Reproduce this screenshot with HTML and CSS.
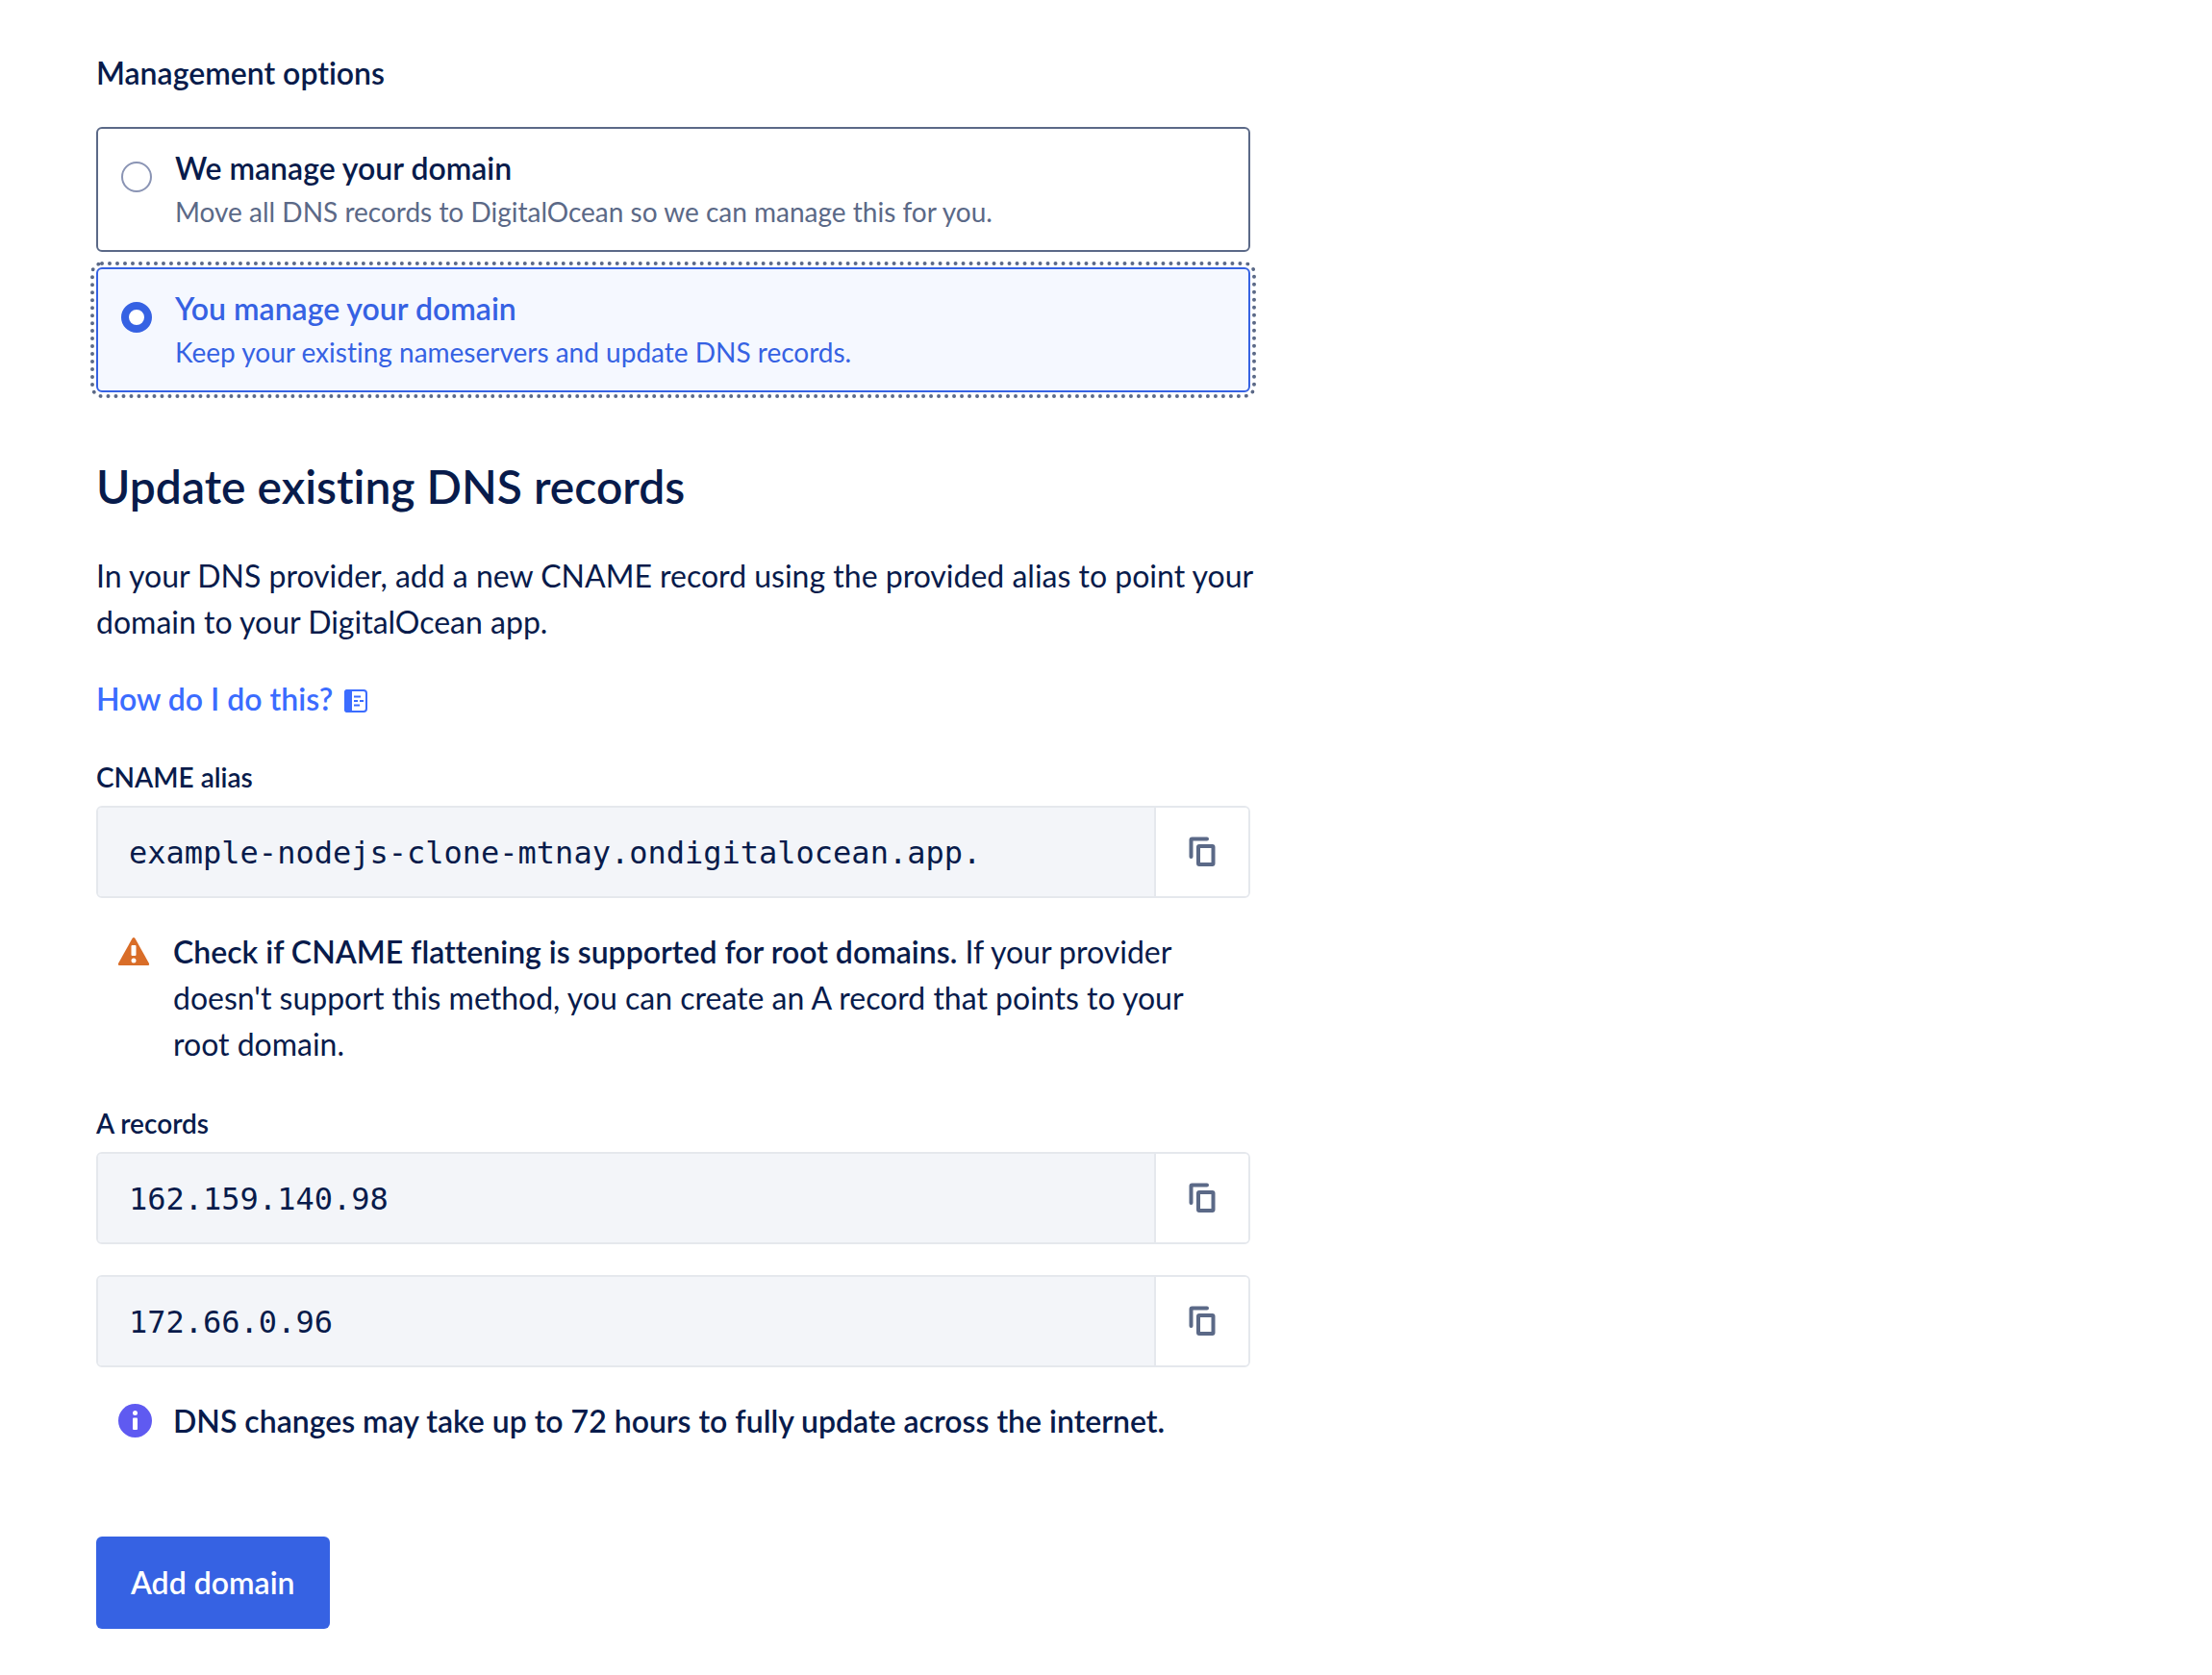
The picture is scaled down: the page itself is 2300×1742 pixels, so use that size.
FILE: index.html
```html
<!doctype html>
<html lang="en">
<head>
    <meta charset="UTF-8">
    <meta name="viewport" content="width=device-width, initial-scale=1.0">
    <title>Add domain</title>
    <link rel="stylesheet" href="styles.css">
</head>
<body>
    <!--copy icon, shared by all the fields-->
    <svg class="sprite" aria-hidden="true">
        <symbol id="copy" viewBox="0 0 28 32">
            <path d="M2.5 21V3.5q0-1 1-1H19" fill="none" stroke="currentColor" stroke-width="4" stroke-linecap="round"/>
            <rect x="10" y="10" width="15.5" height="19" rx="1" fill="none" stroke="currentColor" stroke-width="4"/>
        </symbol>
    </svg>
    <form class="container">
        <fieldset class="options">
            <legend>Management options</legend>
            <label class="option">
                <input type="radio" name="manage" value="we">
                <span class="option-text">
                    <span class="option-title">We manage your domain</span>
                    <span class="option-desc">Move all DNS records to DigitalOcean so we can manage this for you.</span>
                </span>
            </label>
            <label class="option on">
                <input type="radio" name="manage" value="you" checked>
                <span class="option-text">
                    <span class="option-title">You manage your domain</span>
                    <span class="option-desc">Keep your existing nameservers and update DNS records.</span>
                </span>
            </label>
        </fieldset>

        <h2>Update existing DNS records</h2>
        <p class="intro">In your DNS provider, add a new CNAME record using the provided alias to point your domain to your DigitalOcean app.</p>
        <a class="help" href="#">How do I do this?
            <svg width="24" height="24" viewBox="0 0 24 24" aria-hidden="true">
                <rect x="1" y="1" width="22" height="22" rx="3" fill="none" stroke="currentColor" stroke-width="2"/>
                <path d="M3 0h5v24H3q-3 0-3-3V3q0-3 3-3z" fill="currentColor"/>
                <path d="M10 7.5h7M10 12h4M16 12h4M10 16.500h6" fill="none" stroke="currentColor" stroke-width="2"/>
            </svg>
        </a>

        <label class="label" for="cname">CNAME alias</label>
        <div class="field">
            <input id="cname" type="text" value="example-nodejs-clone-mtnay.ondigitalocean.app." readonly>
            <button type="button" aria-label="Copy"><svg width="28" height="32"><use href="#copy"/></svg></button>
        </div>

        <div class="notice">
            <svg width="36" height="36" viewBox="0 0 36 36" aria-hidden="true">
                <path d="M15.500 4q1.500-2 3 0l14.500 26q.8 2-1 2H2q-1.800 0-1-2z" fill="#d96d28"/>
                <rect x="14.500" y="11" width="5" height="11" rx="1" fill="#fff"/>
                <circle cx="17" cy="27" r="2.500" fill="#fff"/>
            </svg>
            <p><strong>Check if CNAME flattening is supported for root domains.</strong> If your provider doesn't support this method, you can create an A record that points to your root domain.</p>
        </div>

        <label class="label" for="record1">A records</label>
        <div class="field">
            <input id="record1" type="text" value="162.159.140.98" readonly>
            <button type="button" aria-label="Copy"><svg width="28" height="32"><use href="#copy"/></svg></button>
        </div>
        <div class="field">
            <input id="record2" type="text" value="172.66.0.96" aria-label="A records" readonly>
            <button type="button" aria-label="Copy"><svg width="28" height="32"><use href="#copy"/></svg></button>
        </div>

        <div class="notice">
            <svg width="36" height="36" viewBox="0 0 36 36" aria-hidden="true">
                <circle cx="18.500" cy="17.500" r="17.500" fill="#5f5af1"/>
                <circle cx="18.500" cy="9.500" r="2.500" fill="#fff"/>
                <rect x="16" y="14.500" width="5" height="12.500" rx="1" fill="#fff"/>
            </svg>
            <p><strong>DNS changes may take up to 72 hours to fully update across the internet.</strong></p>
        </div>

        <button class="submit" type="submit">Add domain</button>
    </form>
</body>
</html>
```
FILE: styles.css
```css
*{
    box-sizing: border-box;
    padding: 0;
    margin: 0;
}
body{
    padding: 52px 100px 48px;
    background: #fff;
    color: #081b4b;
    font: 400 32px/48px Lato, sans-serif;
    font-variant-ligatures: none;
}
.sprite{
    display: none;
}
.container{
    max-width: 1200px;
}
.container strong{
    font-weight: 600;
}

/* radio cards */
.options{
    border: none;
    display: flex;
    flex-direction: column;
    gap: 16px;
}
.options legend{
    font-weight: 600;
    margin-bottom: 32px;
}
.option{
    display: flex;
    gap: 24px;
    padding: 17px 24px 19px;
    border: 2px solid #5b6987;
    border-radius: 6px;
}
.option input{
    appearance: none;
    flex: none;
    width: 32px;
    height: 32px;
    margin-top: 17px;
    border: 2px solid #8a94b4;
    border-radius: 50%;
    background: #fff;
}
.option input:checked{
    border: 8px solid #3662e3;
}
.option-title,.option-desc{
    display: block;
}
.option-title{
    font-weight: 600;
}
.option-desc{
    font-size: 28px;
    line-height: 42px;
    color: #5b6987;
}
.option.on{
    border-color: #3662e3;
    background: #f5f8ff;
    outline: 4px dotted #5b6987;
    outline-offset: 2px;
}
.option.on .option-title,.option.on .option-desc{
    color: #3662e3;
}

h2{
    margin-top: 66px;
    font-size: 48px;
    line-height: 64px;
    font-weight: 600;
}
.intro{
    margin: 37px -16px 0 0;
}
.help{
    display: flex;
    align-items: center;
    gap: 12px;
    width: fit-content;
    margin-top: 32px;
    color: #3b6cff;
    font-weight: 600;
    text-decoration: none;
}
.help svg{
    margin-top: 3px;
}

/* read only values with a copy button */
.label{
    display: block;
    margin: 37px 0 10px;
    font-size: 28px;
    line-height: 40px;
    font-weight: 600;
}
.field{
    display: flex;
    height: 96px;
    border: 2px solid #e5e8ed;
    border-radius: 6px;
    overflow: hidden;
}
.field + .field{
    margin-top: 32px;
}
.field input{
    flex: 1;
    min-width: 0;
    padding: 2px 32px 0;
    border: none;
    background: #f3f5f9;
    color: #081b4b;
    font: 32px "DejaVu Sans Mono", monospace;
}
.field button{
    display: flex;
    align-items: center;
    justify-content: center;
    width: 98px;
    border: none;
    border-left: 2px solid #e5e8ed;
    background: #fff;
    color: #5b6987;
}

.notice{
    display: flex;
    gap: 22px;
    margin: 32px 0 38px;
    padding: 0 24px 0 22px;
}
.notice svg{
    flex: none;
    margin-top: 6px;
}

.submit{
    display: block;
    height: 96px;
    margin-top: 96px;
    padding: 0 36px;
    border: none;
    border-radius: 6px;
    background: #3662e3;
    color: #fff;
    font: 600 32px/48px Lato, sans-serif;
}
```
